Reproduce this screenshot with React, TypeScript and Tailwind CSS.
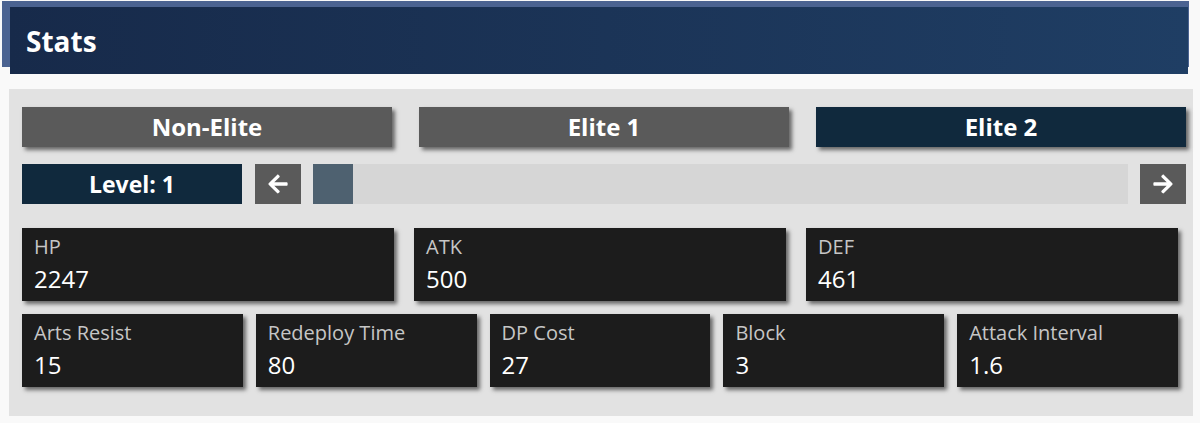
import { FaArrowLeft, FaArrowRight } from 'react-icons/fa';

const font = { fontFamily: '"Open Sans", "Noto Sans", sans-serif' };

const topStats = [
    { label: 'HP', value: '2247' },
    { label: 'ATK', value: '500' },
    { label: 'DEF', value: '461' },
];

const bottomStats = [
    { label: 'Arts Resist', value: '15' },
    { label: 'Redeploy Time', value: '80' },
    { label: 'DP Cost', value: '27' },
    { label: 'Block', value: '3' },
    { label: 'Attack Interval', value: '1.6' },
];

const tabs = [
    { name: 'Non-Elite', active: false },
    { name: 'Elite 1', active: false },
    { name: 'Elite 2', active: true },
];

const StatCard = ({ label, value }: { label: string; value: string }) => (
    <div className="h-[73px] bg-[#1c1c1c] px-3 pt-[5px] shadow-[3px_3px_4px_rgba(0,0,0,0.55)]">
        <div className="text-[20px] leading-[27px] text-[#c6c6c6]">{label}</div>
        <div className="mt-[2px] text-[24px] leading-[33px] text-white">{value}</div>
    </div>
);

const App = () => {
    return (
        <section className="w-[1200px] h-[423px] bg-[#f9f9f9] overflow-hidden pt-[1px]" style={font}>
            <div className="ml-[2px] w-[1187px] h-[66px] pt-[6px] pl-[8px] bg-[#4b6391]">
                <div className="w-[1178px] h-[67px] flex items-center pl-[16px] bg-gradient-to-r from-[#172a4a] to-[#1f3e64]">
                    <h1 className="text-[28px] font-bold text-white">Stats</h1>
                </div>
            </div>

            <div className="ml-[9px] mt-[22px] w-[1184px] h-[327px] bg-[#e2e2e2] pl-[13px] pt-[18px]">
                <div className="flex gap-[27px] w-[1164px]">
                    {tabs.map((tab) => (
                        <button
                            key={tab.name}
                            className={`w-[370px] h-[40px] flex items-center justify-center text-[24px] font-bold text-white shadow-[3px_3px_4px_rgba(0,0,0,0.55)] ${tab.active ? 'bg-[#10293d]' : 'bg-[#5a5a5a]'}`}
                        >
                            {tab.name}
                        </button>
                    ))}
                </div>

                <div className="flex gap-[12px] w-[1164px] h-[40px] mt-[17px]">
                    <div className="w-[220px] flex items-center justify-center bg-[#10293d] text-[23px] font-bold text-white">
                        Level: 1
                    </div>
                    <button className="w-[46px] ml-[1px] flex items-center justify-center bg-[#5a5a5a] text-white">
                        <FaArrowLeft size={22} />
                    </button>
                    <div className="flex-1 bg-[#d6d6d6]">
                        <div className="w-[40px] h-full bg-[#4e6170]"></div>
                    </div>
                    <button className="w-[46px] flex items-center justify-center bg-[#5a5a5a] text-white">
                        <FaArrowRight size={22} />
                    </button>
                </div>

                <div className="grid grid-cols-3 gap-[20px] w-[1156px] mt-[24px]">
                    {topStats.map((s) => (
                        <StatCard key={s.label} {...s} />
                    ))}
                </div>

                <div className="grid grid-cols-5 gap-[13px] w-[1156px] mt-[13px]">
                    {bottomStats.map((s) => (
                        <StatCard key={s.label} {...s} />
                    ))}
                </div>
            </div>
        </section>
    );
};

export default App;
